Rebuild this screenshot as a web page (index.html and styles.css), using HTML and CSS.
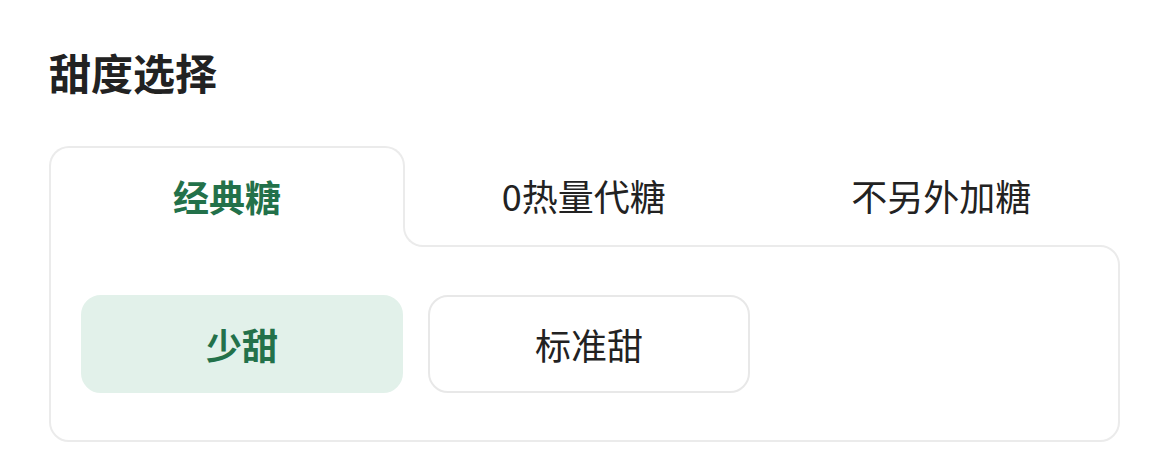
FILE: index.html
```html
<!DOCTYPE html>
<html lang="zh-CN">
<head>
  <meta charset="UTF-8">
  <meta name="viewport" content="width=device-width, initial-scale=1.0">
  <title>甜度选择</title>
  <link rel="stylesheet" href="styles.css">
</head>
<body>
  <div class="container">
    <h1 class="title">甜度选择</h1>
    <div class="card">
      <div class="tabs">
        <div class="tab active">经典糖</div>
        <div class="tab">0热量代糖</div>
        <div class="tab">不另外加糖</div>
      </div>
      <div class="panel">
        <button class="option selected">少甜</button>
        <button class="option">标准甜</button>
      </div>
    </div>
  </div>
</body>
</html>
```

FILE: styles.css
```css
body {
  font-family: "Noto Sans CJK SC", "Noto Sans", sans-serif;
  background-color: #fff;
  color: #222;
  margin: 0;
  padding: 0;
}
.container {
  padding: 47px 50px 0 49px;
}
.title {
  margin: 0 0 49px;
  font-size: 42px;
  line-height: 50px;
  font-weight: 700;
  color: #222;
}
.card {
  width: 1071px;
}
.tabs {
  display: flex;
}
.tab {
  flex: 1;
  height: 99px;
  display: flex;
  justify-content: center;
  align-items: center;
  font-size: 36px;
  color: #222;
  padding-bottom: 2px;
  box-sizing: border-box;
}
.tab.active {
  flex: 0 0 356px;
  position: relative;
  z-index: 1;
  height: 101px;
  margin-bottom: -2px;
  padding-bottom: 4px;
  background-color: #fff;
  border: 2px solid #ebebeb;
  border-bottom: none;
  border-radius: 20px 20px 0 0;
  color: #23714a;
  font-weight: 700;
}
/* cover the straight edge, then draw the inner curve */
.tab.active::before {
  content: "";
  position: absolute;
  left: 100%;
  bottom: 0;
  width: 24px;
  height: 22px;
  background-color: #fff;
}
.tab.active::after {
  content: "";
  position: absolute;
  left: 100%;
  bottom: 0;
  width: 22px;
  height: 20px;
  border-left: 2px solid #ebebeb;
  border-bottom: 2px solid #ebebeb;
  border-bottom-left-radius: 20px;
}
.panel {
  display: flex;
  gap: 25px;
  padding: 48px 30px 47px;
  border: 2px solid #ebebeb;
  border-radius: 0 20px 20px 20px;
}
.option {
  width: 322px;
  height: 98px;
  font-family: inherit;
  font-size: 36px;
  color: #222;
  background-color: #fff;
  border: 2px solid #e8e8e8;
  border-radius: 20px;
  cursor: pointer;
}
.option.selected {
  background-color: #e2f1ea;
  border-color: #e2f1ea;
  color: #23714a;
  font-weight: 700;
}
```
